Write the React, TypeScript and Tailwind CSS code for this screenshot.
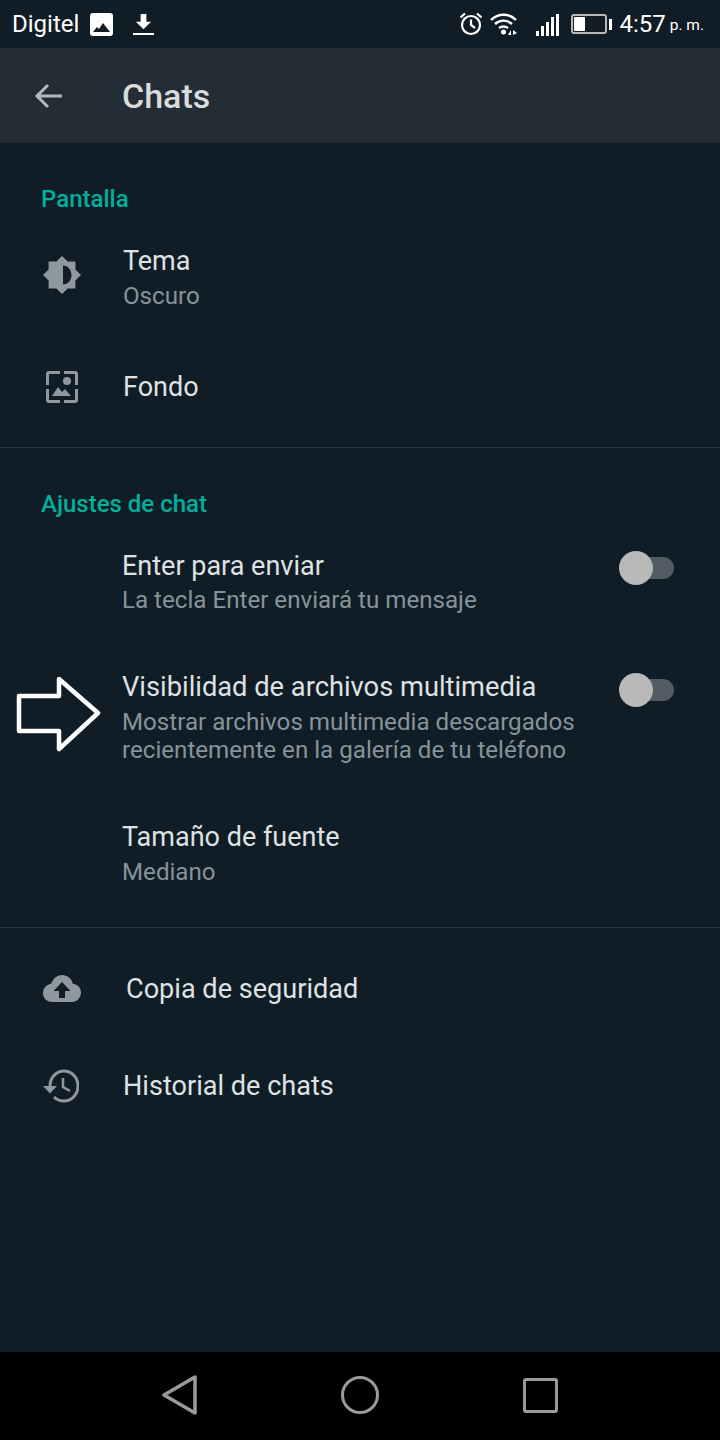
const font = { fontFamily: 'Roboto, sans-serif' };

function Toggle() {
  return (
    <div className="relative h-[22px] w-[55px] shrink-0">
      <div className="absolute right-0 top-0 h-[22px] w-[40px] rounded-full bg-[#515c63]" />
      <div className="absolute left-0 top-[-6px] h-[34px] w-[34px] rounded-full bg-[#b9b9b9]" />
    </div>
  );
}

function SectionLabel({ children, className }: { children: string; className: string }) {
  return (
    <div className={`pl-[41px] text-[24px] leading-[28px] font-medium text-[#00af9c] ${className}`}>{children}</div>
  );
}

function ThemeIcon() {
  return (
    <svg width="40" height="40" viewBox="0 0 40 40" fill="#8f989e">
      <path fillRule="evenodd" d="M20 1l5.600 5.600h7.800v7.800L39 20l-5.600 5.600v7.800h-7.800L20 39l-5.600-5.600H6.600v-7.800L1 20l5.600-5.600V6.600h7.800L20 1zm1 9.500v19c5 0 8.500-4.500 8.500-9.500S26 10.500 21 10.500z" />
    </svg>
  );
}

function WallpaperIcon() {
  return (
    <svg width="34" height="34" viewBox="0 0 34 34" fill="#8f989e">
      <path d="M4 1h11v3H4v11H1V4a3 3 0 0 1 3-3zM19 1h11a3 3 0 0 1 3 3v11h-3V4H19V1zM1 19h3v11h11v3H4a3 3 0 0 1-3-3V19zM30 19h3v11a3 3 0 0 1-3 3H19v-3h11V19z" />
      <circle cx="22" cy="11" r="4" />
      <path d="M7 26l6-9 4 5 3-3 6 7H7z" />
    </svg>
  );
}

function BackupIcon() {
  return (
    <svg width="38" height="28" viewBox="0 0 38 28">
      <path fill="#8f989e" d="M19 0c5.400 0 9.800 3.700 10.800 8.800C34.400 9.200 38 13 38 17.600 38 23.300 33.700 27 29 27H9c-5 0-9-3.800-9-9 0-4.700 3.500-8.500 8-9C10 3.800 14 0 19 0z" />
      <path fill="#111d26" d="M19 7l8.500 9H22v7h-6v-7h-5.500L19 7z" />
    </svg>
  );
}

function HistoryIcon() {
  return (
    <svg width="36" height="34" viewBox="0 0 36 34" fill="none" stroke="#8f989e">
      <path strokeWidth="3" d="M7 17C7 9 13 2 21 2c8 0 14 7 14 15s-6 15-14 15c-4 0-7.500-1.500-10-4" />
      <path fill="#8f989e" stroke="none" d="M0 17h14l-7 7.500L0 17z" />
      <path strokeWidth="2.500" d="M20 9v9l7 4" />
    </svg>
  );
}

export default function App() {
  return (
    <div className="flex h-[1440px] w-[720px] flex-col overflow-hidden bg-[#111d26]" style={font}>
      {/* Status bar */}
      <div className="flex h-[48px] shrink-0 items-center justify-between bg-[#111d26] pl-[12px] pr-[16px] text-white">
        <div className="flex items-center">
          <span className="text-[24px] leading-none">Digitel</span>
          <svg className="ml-[11px]" width="23" height="23" viewBox="0 0 23 23">
            <rect width="23" height="23" rx="3" fill="#fff" />
            <path d="M3 19l4-5 2 2 4-6 7 9H3z" fill="#111d26" />
          </svg>
          <svg className="ml-[20px]" width="21" height="21" viewBox="0 0 22 22" fill="#fff">
            <path d="M8 0h6v8h5l-8 8-8-8h5V0zM0 20h22v2H0z" />
          </svg>
        </div>
        <div className="flex items-center">
          <svg width="24" height="24" viewBox="0 0 24 24" fill="none" stroke="#fff" strokeWidth="2.200">
            <circle cx="12" cy="13" r="9" />
            <path d="M12 7.500V13l4 3M1.500 5.500L6 1.500M22.500 5.500L18 1.500" />
          </svg>
          <svg className="ml-[7px]" width="28" height="24" viewBox="0 0 28 24" fill="none" stroke="#fff" strokeWidth="2.400">
            <path d="M1 8c7-7 18-7 25 0M5 12c5-4.500 12-4.500 17 0M9 16c3-2 6-2 9 0" />
            <circle cx="13.500" cy="20" r="2.500" fill="#fff" stroke="none" />
            <path d="M18 23l3-5v5zM23 18l4 3-4 2z" fill="#fff" stroke="none" />
          </svg>
          <div className="ml-[18px] flex h-[24px] items-end gap-[2px]">
            <div className="h-[5px] w-[3px] bg-white" />
            <div className="h-[10px] w-[3px] bg-white" />
            <div className="h-[14px] w-[3px] bg-white" />
            <div className="h-[19px] w-[3px] bg-white" />
            <div className="h-[22px] w-[3px] bg-white" />
          </div>
          <div className="ml-[12px] flex items-center">
            <div className="h-[20px] w-[36px] rounded-[3px] border-2 border-[#b5b9bc] p-[1px]">
              <div className="h-full w-[11px] bg-white" />
            </div>
            <div className="ml-[2px] h-[11px] w-[3px] bg-white" />
          </div>
          <span className="ml-[7px] text-[24px] leading-none">4:57</span>
          <span className="ml-[4px] mt-[4px] text-[15.5px] leading-none">p. m.</span>
        </div>
      </div>

      {/* App bar */}
      <div className="flex h-[95px] shrink-0 items-center bg-[#232d36]">
        <svg className="ml-[34px]" width="28" height="26" viewBox="0 0 28 26" fill="none" stroke="#b4b8bb" strokeWidth="3">
          <path d="M28 13H3M14 2L3 13l11 11" />
        </svg>
        <h1 className="ml-[60px] text-[34px] leading-none font-medium text-[#d9dbdd]">Chats</h1>
      </div>

      {/* Settings list */}
      <div className="flex-1">
        <SectionLabel className="mt-[42px]">Pantalla</SectionLabel>

        <div className="mt-[33px] flex items-start">
          <div className="ml-[42px] mt-[9px] flex w-[40px] justify-center"><ThemeIcon /></div>
          <div className="ml-[41px]">
            <div className="text-[27px] leading-[30px] text-[#dfe2e3]">Tema</div>
            <div className="mt-[7px] text-[24.15px] leading-[26px] text-[#87939a]">Oscuro</div>
          </div>
        </div>

        <div className="mt-[58px] flex h-[40px] items-center">
          <div className="ml-[45px] w-[34px]"><WallpaperIcon /></div>
          <div className="ml-[44px] text-[27px] leading-[30px] text-[#dfe2e3]">Fondo</div>
        </div>

        <div className="mt-[40px] border-t border-[#2a343b]" />

        <SectionLabel className="mt-[42px]">Ajustes de chat</SectionLabel>

        <div className="mt-[33px] flex items-start justify-between pl-[122px] pr-[46px]">
          <div>
            <div className="text-[27px] leading-[30px] text-[#dfe2e3]">Enter para enviar</div>
            <div className="mt-[6px] text-[24.15px] leading-[26px] text-[#87939a]">La tecla Enter enviará tu mensaje</div>
          </div>
          <div className="mt-[6px]"><Toggle /></div>
        </div>

        <div className="relative mt-[59px] flex items-start justify-between pl-[122px] pr-[46px]">
          {/* White outline arrow drawn over the screenshot */}
          <svg className="absolute left-[15px] top-[3px]" width="86" height="78" viewBox="0 0 86 78" fill="none" stroke="#fff" strokeWidth="4.500" strokeLinejoin="round">
            <path d="M4 21h40V4l39 34-39 36V56H4V21z" />
          </svg>
          <div>
            <div className="text-[27.27px] leading-[30px] text-[#dfe2e3]">Visibilidad de archivos multimedia</div>
            <div className="mt-[6px] text-[24.15px] leading-[28px] text-[#87939a]">
              Mostrar archivos multimedia descargados
              <br />
              recientemente en la galería de tu teléfono
            </div>
          </div>
          <div className="mt-[7px]"><Toggle /></div>
        </div>

        <div className="mt-[58px] pl-[122px]">
          <div className="text-[27px] leading-[30px] text-[#dfe2e3]">Tamaño de fuente</div>
          <div className="mt-[7px] text-[24.15px] leading-[26px] text-[#87939a]">Mediano</div>
        </div>

        <div className="mt-[42px] border-t border-[#2a343b]" />

        <div className="mt-[41px] flex h-[40px] items-center">
          <div className="ml-[43px] w-[38px]"><BackupIcon /></div>
          <div className="ml-[45px] text-[27.1px] leading-[30px] text-[#dfe2e3]">Copia de seguridad</div>
        </div>

        <div className="mt-[57px] flex h-[40px] items-center">
          <div className="ml-[43px] w-[36px]"><HistoryIcon /></div>
          <div className="ml-[44px] text-[27.1px] leading-[30px] text-[#dfe2e3]">Historial de chats</div>
        </div>
      </div>

      {/* Navigation bar */}
      <div className="flex h-[88px] shrink-0 items-center bg-black pb-[2px]">
        <svg className="ml-[162px]" width="36" height="40" viewBox="0 0 36 40" fill="none" stroke="#9a9a9a" strokeWidth="3.500" strokeLinejoin="round">
          <path d="M33 2v36L2 20 33 2z" />
        </svg>
        <div className="ml-[143px] h-[38px] w-[38px] rounded-full border-[3.5px] border-[#9a9a9a]" />
        <div className="ml-[144px] h-[35px] w-[35px] rounded-[3px] border-[3.5px] border-[#9a9a9a]" />
      </div>
    </div>
  );
}
